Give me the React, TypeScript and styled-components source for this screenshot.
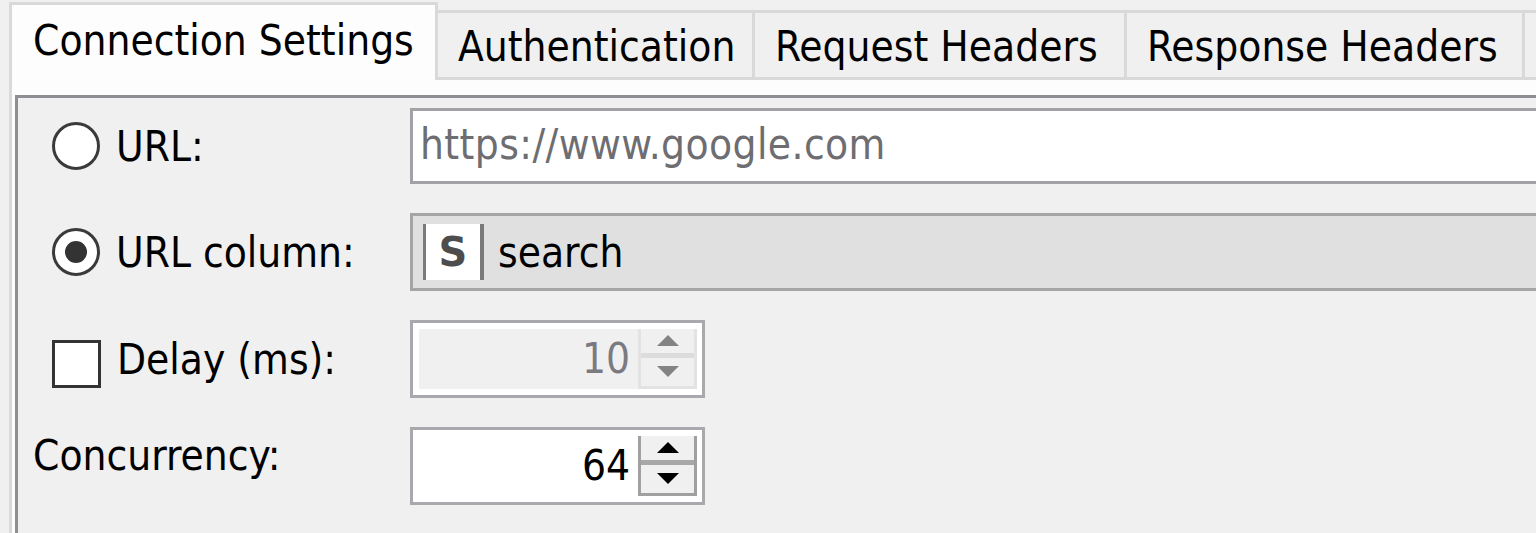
import React from "react";
import styled, { createGlobalStyle } from "styled-components";

const Global = createGlobalStyle`
  html, body { margin: 0; padding: 0; background: #f0f0f0; overflow: hidden; }
  body { font-family: "DejaVu Sans Condensed", "DejaVu Sans", sans-serif; color: #000; }
`;

const Window = styled.div`
  width: 1536px;
  height: 533px;
  padding-left: 9px;
  box-sizing: border-box;
  display: flex;
  flex-direction: column;
  overflow: hidden;
  font-size: 42px;
`;

const TabStrip = styled.div`
  display: flex;
  align-items: flex-end;
  height: 78px;
  margin-top: 2px;
  flex-shrink: 0;
`;

const Tab = styled.div<{ $w: number; $selected?: boolean }>`
  box-sizing: border-box;
  width: ${(p) => p.$w}px;
  flex-shrink: 0;
  height: ${(p) => (p.$selected ? 78 : 70)}px;
  display: flex;
  align-items: center;
  padding-left: ${(p) => (p.$selected ? 21 : 20)}px;
  padding-bottom: ${(p) => (p.$selected ? 4 : 0)}px;
  padding-top: ${(p) => (p.$selected ? 0 : 3)}px;
  white-space: nowrap;
  background: ${(p) => (p.$selected ? "#fdfdfd" : "#f0f0f0")};
  border: 3px solid #d9d9d9;
  border-bottom: ${(p) => (p.$selected ? "none" : "3px solid #d9d9d9")};
  border-left: ${(p) => (p.$selected ? "3px solid #d9d9d9" : "none")};
`;

const TabBody = styled.div`
  flex: 1;
  background: #fdfdfd;
  border-left: 3px solid #d9d9d9;
  padding: 15px 0 0 3px;
  display: flex;
`;

const ContentPanel = styled.div`
  flex: 1;
  background: #f0f0f0;
  border-top: 3px solid #8e8e93;
  border-left: 3px solid #8e8e93;
  padding: 10px 0 0 15px;
  display: grid;
  grid-template-columns: 377px 1200px;
  grid-auto-rows: min-content;
  row-gap: 29px;
  align-items: center;
`;

const OptionLabel = styled.label`
  display: flex;
  align-items: center;
  margin-left: 19px;
  gap: 16px;
  white-space: nowrap;
`;

const PlainLabel = styled.div`
  white-space: nowrap;
  align-self: start;
  margin-top: 4px;
`;

const Radio = styled.span<{ $checked?: boolean }>`
  width: 48px;
  height: 48px;
  box-sizing: border-box;
  border-radius: 50%;
  border: 3px solid #3a3a3a;
  background: #fff;
  display: flex;
  align-items: center;
  justify-content: center;
  &::after {
    content: "";
    width: 22px;
    height: 22px;
    border-radius: 50%;
    background: #333;
    display: ${(p) => (p.$checked ? "block" : "none")};
  }
`;

const Check = styled.span`
  width: 49px;
  height: 48px;
  box-sizing: border-box;
  border: 3px solid #333;
  background: #fff;
  margin-top: 10px;
`;

const TextField = styled.div`
  box-sizing: border-box;
  height: 76px;
  border: 3px solid #a2a2a6;
  background: #fff;
  color: #6d6d72;
  display: flex;
  align-items: center;
  padding-left: 7px;
  padding-bottom: 4px;
  white-space: nowrap;
  letter-spacing: 0.4px;
`;

const Combo = styled.div`
  box-sizing: border-box;
  height: 78px;
  border: 3px solid #a5a5a8;
  background: #e0e0e0;
  display: flex;
  align-items: center;
  padding-left: 10px;
  gap: 14px;
  white-space: nowrap;
`;

const TypeBadge = styled.span`
  box-sizing: border-box;
  width: 61px;
  height: 56px;
  background: #fff;
  border-left: 3px solid #7a7a7a;
  border-right: 4px solid #7a7a7a;
  display: flex;
  align-items: center;
  justify-content: center;
  font-family: "DejaVu Sans", sans-serif;
  font-weight: bold;
  font-size: 40px;
  color: #4d4d4d;
`;

const Spinner = styled.div<{ $disabled?: boolean }>`
  box-sizing: border-box;
  width: 295px;
  height: 78px;
  border: 3px solid #a9a9ad;
  background: #fff;
  display: flex;
  padding: 6px 5px 6px 0;
`;

const SpinEditor = styled.div<{ $disabled?: boolean }>`
  flex: 1;
  box-sizing: border-box;
  background: ${(p) => (p.$disabled ? "#f0f0f0" : "#fff")};
  margin-left: 6px;
  color: ${(p) => (p.$disabled ? "#7a7a80" : "#000")};
  display: flex;
  align-items: center;
  justify-content: flex-end;
  padding-right: 8px;
  padding-bottom: 2px;
`;

const SpinButtons = styled.div<{ $disabled?: boolean }>`
  width: 59px;
  box-sizing: border-box;
  display: grid;
  grid-template-rows: 1fr 1fr;
  border-left: 3px solid ${(p) => (p.$disabled ? "#e3e3e3" : "#a0a0a0")};
  border-right: 3px solid ${(p) => (p.$disabled ? "#e3e3e3" : "#a0a0a0")};
  border-bottom: 3px solid ${(p) => (p.$disabled ? "#e3e3e3" : "#a0a0a0")};
  background: #f0f0f0;
`;

const SpinButton = styled.div<{ $disabled?: boolean; $top?: boolean }>`
  display: flex;
  align-items: center;
  justify-content: center;
  border-bottom: ${(p) => (p.$top ? `5px solid ${p.$disabled ? "#dcdcdc" : "#a8a8a8"}` : "none")};
  color: ${(p) => (p.$disabled ? "#838383" : "#000")};
`;

const Arrow = ({ up }: { up?: boolean }) => (
  <svg width="22" height="11" viewBox="0 0 22 11">
    <polygon points={up ? "0,11 22,11 11,0" : "0,0 22,0 11,11"} fill="currentColor" />
  </svg>
);

const NumberSpinner = ({ value, disabled }: { value: string; disabled?: boolean }) => (
  <Spinner $disabled={disabled}>
    <SpinEditor $disabled={disabled}>{value}</SpinEditor>
    <SpinButtons $disabled={disabled}>
      <SpinButton $top $disabled={disabled}>
        <Arrow up />
      </SpinButton>
      <SpinButton $disabled={disabled}>
        <Arrow />
      </SpinButton>
    </SpinButtons>
  </Spinner>
);

export default function App() {
  return (
    <>
      <Global />
      <Window>
        <TabStrip>
          <Tab $w={429} $selected>Connection Settings</Tab>
          <Tab $w={317}>Authentication</Tab>
          <Tab $w={372}>Request Headers</Tab>
          <Tab $w={398}>Response Headers</Tab>
          <Tab $w={200}></Tab>
        </TabStrip>
        <TabBody>
          <ContentPanel>
            <OptionLabel>
              <Radio />
              URL:
            </OptionLabel>
            <TextField>https://www.google.com</TextField>

            <OptionLabel>
              <Radio $checked />
              URL column:
            </OptionLabel>
            <Combo>
              <TypeBadge>S</TypeBadge>
              search
            </Combo>

            <OptionLabel>
              <Check />
              Delay (ms):
            </OptionLabel>
            <NumberSpinner value="10" disabled />

            <PlainLabel>Concurrency:</PlainLabel>
            <NumberSpinner value="64" />
          </ContentPanel>
        </TabBody>
      </Window>
    </>
  );
}
